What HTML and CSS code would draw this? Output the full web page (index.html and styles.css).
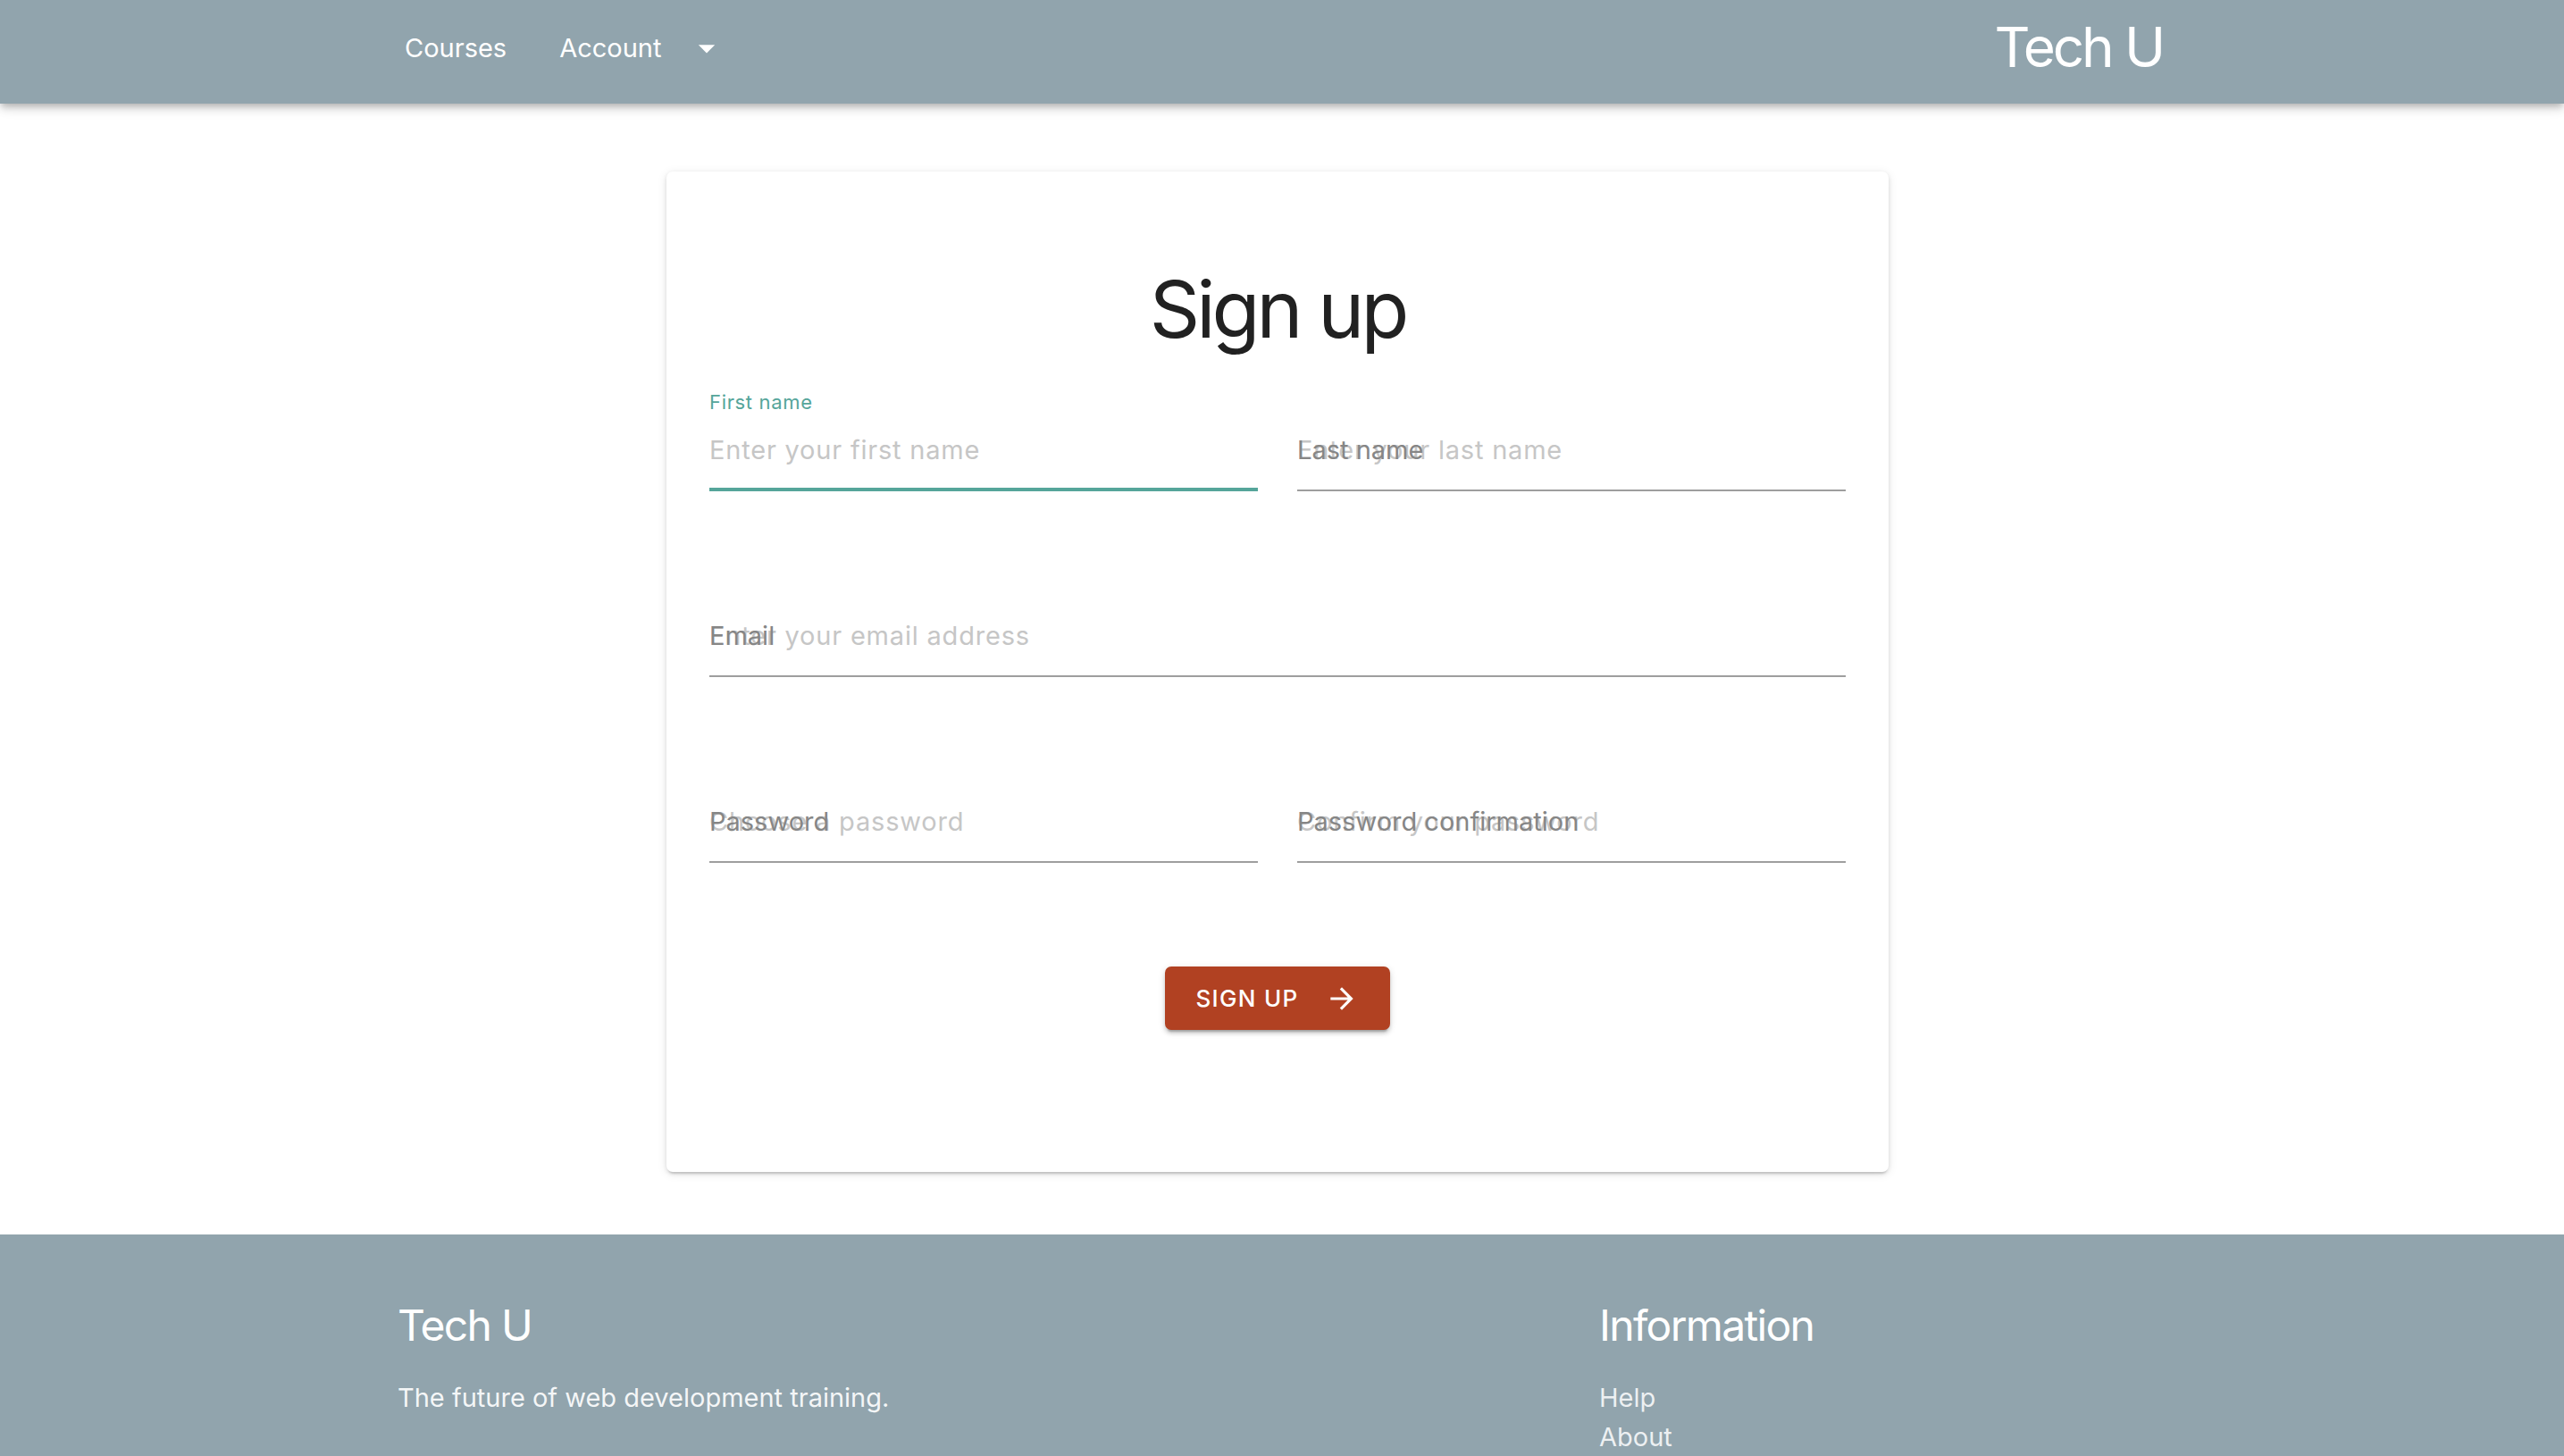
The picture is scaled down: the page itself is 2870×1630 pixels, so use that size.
FILE: index.html
```html
<!DOCTYPE html>
<html lang="en">
<head>
<meta charset="utf-8">
<title>Sign up - Tech U</title>
<link rel="stylesheet" href="styles.css">
</head>
<body>
<header class="appbar">
  <div class="container bar">
    <nav class="nav">
      <a class="nav-btn" href="#">Courses</a>
      <a class="nav-btn" href="#">Account</a>
      <button class="icon-btn" type="button" aria-label="Open account menu">
        <svg viewBox="0 0 24 24" width="44" height="44"><path d="M7 10l5 5 5-5z" fill="#fff"/></svg>
      </button>
    </nav>
    <div class="brand">Tech U</div>
  </div>
</header>

<main class="main">
  <section class="card">
    <h1 class="title">Sign up</h1>
    <form class="form">
      <div class="field focused">
        <label class="label shrink" for="first">First name</label>
        <div class="input-wrap"><input id="first" type="text" placeholder="Enter your first name"></div>
      </div>
      <div class="field">
        <label class="label" for="last">Last name</label>
        <div class="input-wrap"><input id="last" type="text" placeholder="Enter your last name"></div>
      </div>
      <div class="field wide">
        <label class="label" for="email">Email</label>
        <div class="input-wrap"><input id="email" type="email" placeholder="Enter your email address"></div>
      </div>
      <div class="field">
        <label class="label" for="pw">Password</label>
        <div class="input-wrap"><input id="pw" type="password" placeholder="Choose a password"></div>
      </div>
      <div class="field">
        <label class="label" for="pw2">Password confirmation</label>
        <div class="input-wrap"><input id="pw2" type="password" placeholder="Confirm your password"></div>
      </div>
      <div class="actions">
        <button class="submit" type="button">
          <span>SIGN UP</span>
          <svg viewBox="0 0 24 24" width="38" height="38"><path d="M12 4l-1.41 1.41L16.17 11H4v2h12.17l-5.58 5.59L12 20l8-8z" fill="#fff"/></svg>
        </button>
      </div>
    </form>
  </section>
</main>

<footer class="footer">
  <div class="container footer-grid">
    <div class="fcol">
      <h2 class="fhead">Tech U</h2>
      <p class="ftext">The future of web development training.</p>
    </div>
    <div class="fcol">
      <h2 class="fhead">Information</h2>
      <ul class="flinks">
        <li><a href="#">Help</a></li>
        <li><a href="#">About</a></li>
      </ul>
    </div>
  </div>
</footer>
</body>
</html>
```

FILE: styles.css
```css
* { box-sizing: border-box; }

html, body {
  margin: 0;
  padding: 0;
}

body {
  font-family: Inter, "Noto Sans", "Liberation Sans", sans-serif;
  background: #ffffff;
  color: #212121;
  min-height: 1630px;
  display: flex;
  flex-direction: column;
}

.container {
  width: 2000px;
  margin: 0 auto;
}

/* ---------- App bar ---------- */
.appbar {
  background: #91a4ad;
  height: 116px;
  box-shadow: 0 4px 7px -2px rgba(0,0,0,0.2), 0 7px 9px 0 rgba(0,0,0,0.10), 0 2px 18px 0 rgba(0,0,0,0.08);
  position: relative;
  z-index: 2;
}

.bar {
  height: 116px;
  display: flex;
  align-items: center;
  justify-content: space-between;
  padding: 0 14px 8px 3px;
}

.nav {
  display: flex;
  align-items: center;
}

.nav-btn {
  color: #ffffff;
  text-decoration: none;
  font-size: 29px;
  font-weight: 400;
  line-height: 36px;
  padding: 11px 15px;
  margin-right: 29px;
}

.nav-btn + .nav-btn { margin-right: 14px; }

.icon-btn {
  background: none;
  border: 0;
  padding: 0;
  width: 44px;
  height: 44px;
  display: flex;
  cursor: pointer;
}

.brand {
  color: #ffffff;
  font-size: 62px;
  line-height: 72px;
  font-weight: 400;
  letter-spacing: -0.05em;
  margin-bottom: 3px;
}

/* ---------- Main ---------- */
.main {
  padding: 76px 10px 70px 0;
  flex: 0 0 auto;
}

.card {
  width: 1368px;
  margin: 0 auto;
  background: #ffffff;
  border-radius: 7px;
  padding: 102px 48px 159px;
  box-shadow: 0 4px 2px -2px rgba(0,0,0,0.12), 0 2px 4px 0 rgba(0,0,0,0.10), 0 2px 11px 0 rgba(0,0,0,0.10);
}

.title {
  margin: 0 0 41px;
  text-align: center;
  font-size: 88px;
  line-height: 104px;
  font-weight: 400;
  color: #212121;
  letter-spacing: -0.045em;
}

.form {
  display: grid;
  grid-template-columns: 614px 614px;
  column-gap: 44px;
  row-gap: 97px;
}

.field {
  position: relative;
  padding-top: 47px;
}

.field.wide { grid-column: 1 / -1; }

.label {
  position: absolute;
  left: 0;
  top: 47px;
  font-size: 29px;
  line-height: 36px;
  color: #868686;
  white-space: nowrap;
  z-index: 1;
}

.label.shrink {
  top: 0;
  font-size: 22px;
  line-height: 22px;
  letter-spacing: 0.03em;
  color: #55a59a;
}

.input-wrap {
  position: relative;
  padding-bottom: 26px;
  border-bottom: 2px solid #9e9e9e;
}

.field.focused .input-wrap::after {
  content: "";
  position: absolute;
  left: 0;
  right: 0;
  bottom: -2px;
  height: 4px;
  background: #55a59a;
}

.input-wrap input {
  display: block;
  width: 100%;
  height: 36px;
  border: 0;
  outline: 0;
  padding: 0;
  margin: 0;
  background: transparent;
  font-family: inherit;
  font-size: 29px;
  line-height: 36px;
  letter-spacing: 0.8px;
  color: #212121;
}

.input-wrap input::placeholder {
  color: #c6c6c6;
  opacity: 1;
}

.actions {
  grid-column: 1 / -1;
  display: flex;
  justify-content: center;
  margin-top: 19px;
}

.submit {
  width: 252px;
  height: 71px;
  border: 0;
  border-radius: 7px;
  background: #b14122;
  color: #ffffff;
  font-family: inherit;
  font-size: 26px;
  font-weight: 500;
  letter-spacing: 0.05em;
  display: flex;
  align-items: center;
  justify-content: center;
  gap: 30px;
  padding: 0;
  cursor: pointer;
  box-shadow: 0 5px 2px -3px rgba(0,0,0,0.2), 0 4px 4px 0 rgba(0,0,0,0.14), 0 2px 9px 0 rgba(0,0,0,0.12);
}

.submit svg { display: block; }

/* ---------- Footer ---------- */
.footer {
  background: #91a4ad;
  flex: 1 0 auto;
  padding: 70px 0 40px;
  color: #ffffff;
}

.footer-grid {
  display: grid;
  grid-template-columns: 1345px 1fr;
  padding-left: 10px;
}

.fhead {
  margin: 0 0 27px;
  font-size: 48px;
  line-height: 64px;
  font-weight: 400;
  color: #ffffff;
  letter-spacing: -0.035em;
}

.ftext {
  margin: 0;
  font-size: 29px;
  line-height: 44px;
  color: rgba(255,255,255,0.92);
}

.flinks {
  list-style: none;
  margin: 0;
  padding: 0;
}

.flinks a {
  color: rgba(255,255,255,0.85);
  text-decoration: none;
  font-size: 29px;
  line-height: 44px;
}
```
